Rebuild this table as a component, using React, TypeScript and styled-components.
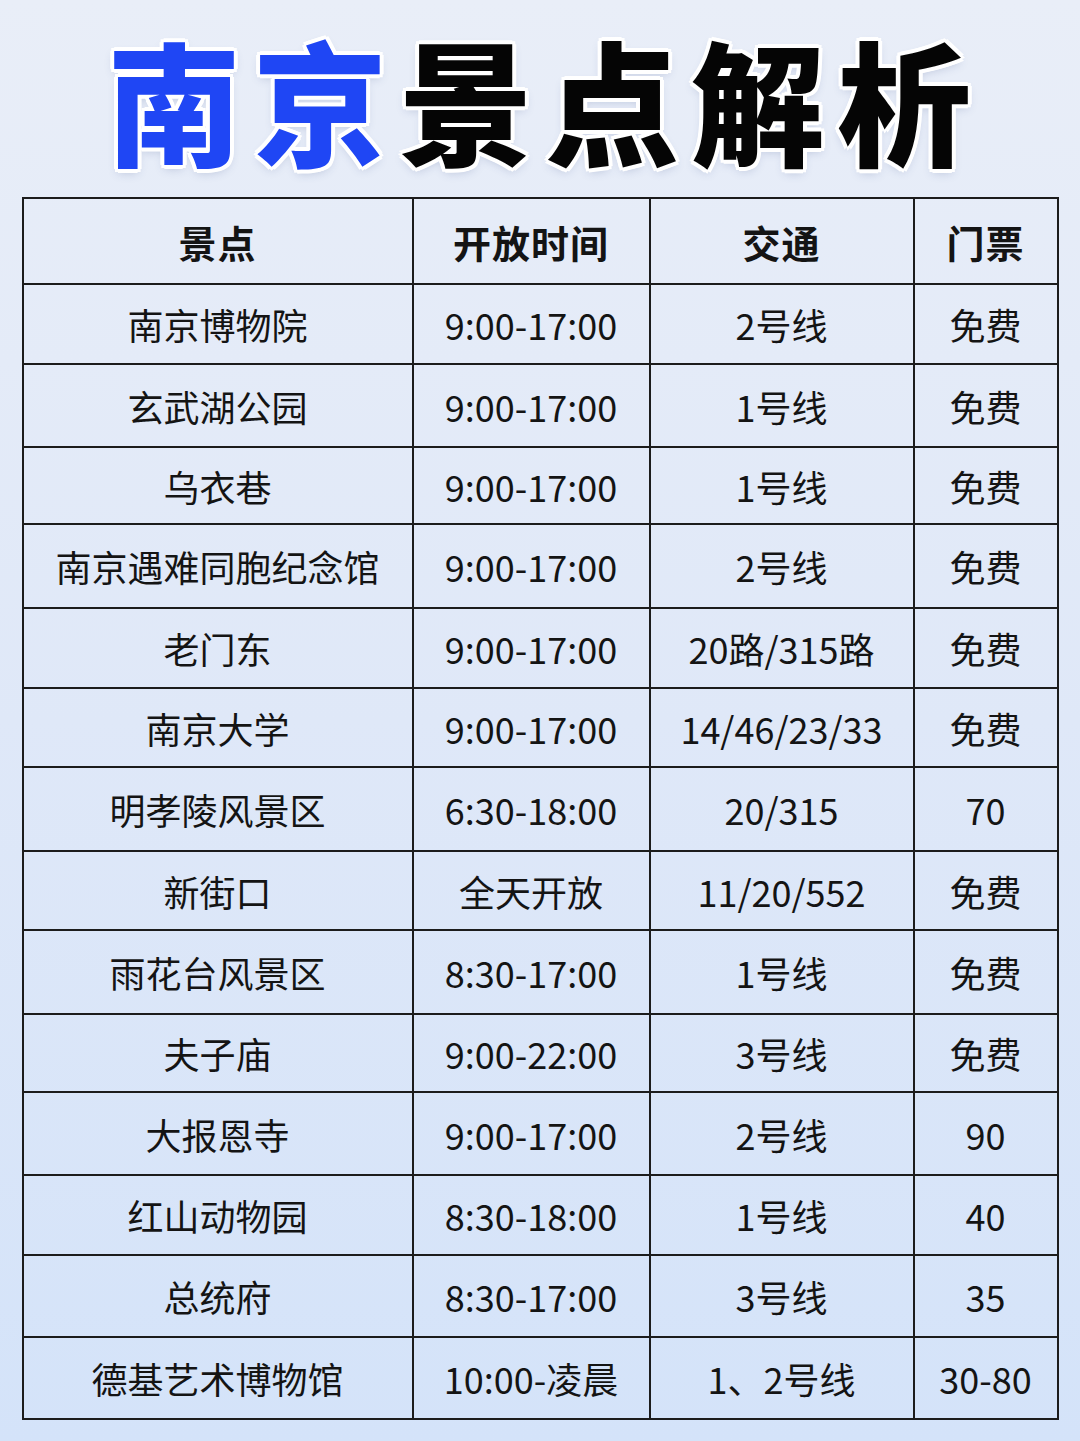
import styled, { createGlobalStyle } from 'styled-components'

const GlobalStyle = createGlobalStyle`
  html, body {
    margin: 0;
    padding: 0;
  }
  body {
    font-family: "Noto Sans CJK SC", "Noto Sans", sans-serif;
    color: #141414;
  }
`

const COLUMNS = [
  { title: '景点', width: 390 },
  { title: '开放时间', width: 237 },
  { title: '交通', width: 264 },
  { title: '门票', width: 144 },
]

type Row = { cells: string[]; height: number }

const ROWS: Row[] = [
  { cells: ['南京博物院', '9:00-17:00', '2号线', '免费'], height: 80 },
  { cells: ['玄武湖公园', '9:00-17:00', '1号线', '免费'], height: 83 },
  { cells: ['乌衣巷', '9:00-17:00', '1号线', '免费'], height: 77 },
  { cells: ['南京遇难同胞纪念馆', '9:00-17:00', '2号线', '免费'], height: 84 },
  { cells: ['老门东', '9:00-17:00', '20路/315路', '免费'], height: 80 },
  { cells: ['南京大学', '9:00-17:00', '14/46/23/33', '免费'], height: 79 },
  { cells: ['明孝陵风景区', '6:30-18:00', '20/315', '70'], height: 84 },
  { cells: ['新街口', '全天开放', '11/20/552', '免费'], height: 79 },
  { cells: ['雨花台风景区', '8:30-17:00', '1号线', '免费'], height: 84 },
  { cells: ['夫子庙', '9:00-22:00', '3号线', '免费'], height: 78 },
  { cells: ['大报恩寺', '9:00-17:00', '2号线', '90'], height: 83 },
  { cells: ['红山动物园', '8:30-18:00', '1号线', '40'], height: 80 },
  { cells: ['总统府', '8:30-17:00', '3号线', '35'], height: 82 },
  { cells: ['德基艺术博物馆', '10:00-凌晨', '1、2号线', '30-80'], height: 82 },
]

export default function App() {
  return (
    <Page>
      <GlobalStyle />
      <Title>
        <TitleWord $color="#1f46f4">南京</TitleWord>
        <TitleWord $color="#050505">景点解析</TitleWord>
      </Title>
      <Table>
        <colgroup>
          {COLUMNS.map((c) => (
            <col key={c.title} style={{ width: c.width }} />
          ))}
        </colgroup>
        <thead>
          <tr>
            {COLUMNS.map((c) => (
              <HeadCell key={c.title}>{c.title}</HeadCell>
            ))}
          </tr>
        </thead>
        <tbody>
          {ROWS.map((row) => (
            <tr key={row.cells[0]}>
              {row.cells.map((cell, i) => (
                <Cell key={i} $h={row.height}>
                  {cell}
                </Cell>
              ))}
            </tr>
          ))}
        </tbody>
      </Table>
    </Page>
  )
}

const Page = styled.div`
  width: 1080px;
  height: 1441px;
  overflow: hidden;
  background: linear-gradient(180deg, #e9eef8 0%, #dfe8f8 50%, #d4e3f9 100%);
  display: flex;
  flex-direction: column;
  align-items: center;
`

const Title = styled.h1`
  margin: 0;
  height: 197px;
  display: flex;
  align-items: center;
  justify-content: center;
  padding-left: 10px;
  box-sizing: border-box;
  font-family: "Noto Sans CJK SC", sans-serif;
  font-weight: 900;
  font-size: 134px;
  line-height: 1.3;
  letter-spacing: 12px;
  white-space: nowrap;
`

const TitleWord = styled.span<{ $color: string }>`
  color: ${(p) => p.$color};
  text-shadow:
    4px 0 0 #fff, -4px 0 0 #fff, 0 4px 0 #fff, 0 -4px 0 #fff,
    3px 3px 0 #fff, -3px 3px 0 #fff, 3px -3px 0 #fff, -3px -3px 0 #fff,
    0 4px 10px rgba(60, 80, 140, 0.25);
`

const Table = styled.table`
  width: 1035px;
  border-collapse: collapse;
  table-layout: fixed;
  margin-left: 0;
`

const HeadCell = styled.th`
  height: 84px;
  border: 2px solid #1c1c1c;
  font-size: 38px;
  font-weight: 700;
  text-align: center;
  vertical-align: middle;
  padding: 0;
  letter-spacing: 1px;
`

const Cell = styled.td<{ $h: number }>`
  height: ${(p) => p.$h - 2}px;
  border: 2px solid #1c1c1c;
  font-size: 36px;
  font-weight: 400;
  text-align: center;
  vertical-align: middle;
  padding: 0;
  white-space: nowrap;
`
